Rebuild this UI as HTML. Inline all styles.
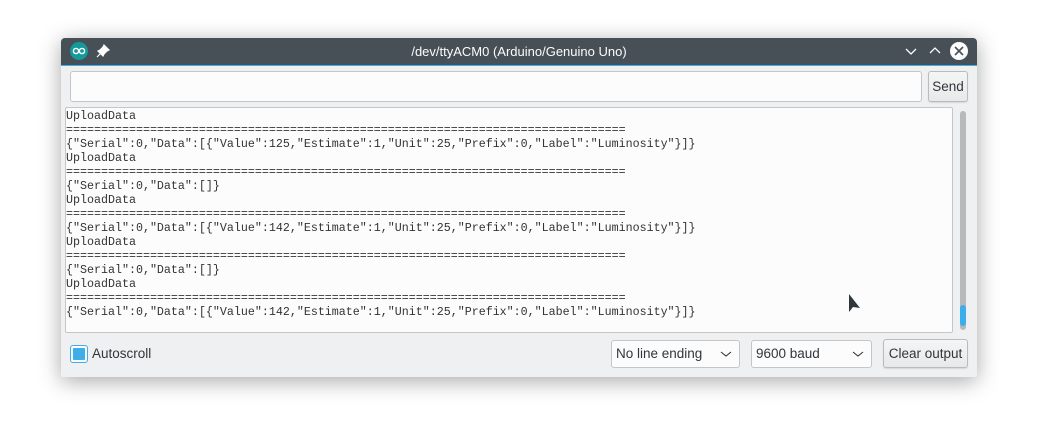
<!DOCTYPE html>
<html><head><meta charset="utf-8"><style>
*{margin:0;padding:0;box-sizing:border-box}
body{width:1038px;height:439px;background:#fff;position:relative;overflow:hidden;font-family:"Liberation Sans",sans-serif}
.win{position:absolute;left:61px;top:38px;width:916px;height:339px;background:#eff0f1;border-radius:4px 4px 2px 2px;box-shadow:0 4px 22px rgba(0,0,0,.35);overflow:hidden}
.tb{position:absolute;left:0;top:0;width:916px;height:28px;background:#475057;border-bottom:1px solid #3daee9}
.title{position:absolute;left:0;right:0;top:6px;text-align:center;color:#fcfcfc;font-size:13px}
.abs{position:absolute}
.input{position:absolute;left:9px;top:33px;width:852px;height:31px;background:#fcfcfc;border:1px solid #c4c6c8;border-radius:3px}
.btn{position:absolute;background:linear-gradient(#f4f5f5,#e8e9ea);border:1px solid #b9bbbd;border-radius:3px;font-size:13.5px;color:#31363b;text-align:center;box-shadow:0 1px 1px rgba(0,0,0,.1)}
.out{position:absolute;left:4px;top:69px;width:888px;height:226px;background:#fcfcfc;border:1px solid #c4c6c8;border-radius:2px;overflow:hidden}
.out pre{font-family:"Liberation Mono",monospace;font-size:11.66px;line-height:14px;color:#333;margin:0;position:relative;top:1px}
.combo{position:absolute;background:#fcfcfc;border:1px solid #c4c6c8;border-radius:3px;font-size:13.5px;color:#31363b;padding:5px 4px}
</style></head><body>
<div class="win">
 <div class="tb">
  <svg class="abs" style="left:8px;top:3px" width="20" height="20" viewBox="0 0 20 20"><circle cx="10" cy="10" r="9" fill="#16999a"/><circle cx="7" cy="10" r="2.6" fill="none" stroke="#fff" stroke-width="1.4"/><circle cx="13" cy="10" r="2.6" fill="none" stroke="#fff" stroke-width="1.4"/></svg>
  <svg class="abs" style="left:35px;top:6px" width="14" height="14" viewBox="0 0 14 14"><path d="M8 1l5 5-2 1-3 3-1 2-5-5 2-1 3-3z M5 9l-4 4" fill="#fff" stroke="#fff" stroke-width="1.2"/></svg>
  <div class="title">/dev/ttyACM0 (Arduino/Genuino Uno)</div>
  <svg class="abs" style="left:843px;top:8px" width="14" height="12"><path d="M2 3l5 5 5-5" fill="none" stroke="#fcfcfc" stroke-width="1.3"/></svg>
  <svg class="abs" style="left:867px;top:6px" width="14" height="12"><path d="M2 9l5-5 5 5" fill="none" stroke="#fcfcfc" stroke-width="1.3"/></svg>
  <svg class="abs" style="left:888px;top:3px" width="20" height="20"><circle cx="10" cy="10" r="9" fill="#fcfcfc"/><path d="M6 6l8 8M14 6l-8 8" stroke="#475057" stroke-width="1.6"/></svg>
 </div>
 <div class="input"></div>
 <div class="btn" style="left:867px;top:33px;width:40px;height:31px;line-height:29px">Send</div>
 <div class="out"><pre>UploadData
================================================================================
{"Serial":0,"Data":[{"Value":125,"Estimate":1,"Unit":25,"Prefix":0,"Label":"Luminosity"}]}
UploadData
================================================================================
{"Serial":0,"Data":[]}
UploadData
================================================================================
{"Serial":0,"Data":[{"Value":142,"Estimate":1,"Unit":25,"Prefix":0,"Label":"Luminosity"}]}
UploadData
================================================================================
{"Serial":0,"Data":[]}
UploadData
================================================================================
{"Serial":0,"Data":[{"Value":142,"Estimate":1,"Unit":25,"Prefix":0,"Label":"Luminosity"}]}</pre>
  <svg class="abs" style="left:782px;top:185px" width="16" height="24"><path d="M1 1v18l4-5 7 1z" fill="#31363b"/></svg>
 </div>
 <div class="abs" style="left:899px;top:73px;width:6px;height:219px;background:#b8b9ba;border-radius:3px"></div>
 <div class="abs" style="left:899px;top:267px;width:6px;height:21px;background:#3daee9;border-radius:3px"></div>
 <div class="abs" style="left:9px;top:307px;width:18px;height:18px;border:1px solid #3daee9;border-radius:3px;background:#fcfcfc"></div>
 <div class="abs" style="left:12px;top:310px;width:12px;height:12px;background:#3daee9;border-radius:1px"></div>
 <div class="abs" style="left:31px;top:308px;font-size:13.5px;color:#31363b">Autoscroll</div>
 <div class="combo" style="left:550px;top:302px;width:129px;height:28px">No line ending</div>
 <svg class="abs" style="left:659px;top:311px" width="12" height="10"><path d="M1 3l5 4 5-4" fill="none" stroke="#31363b" stroke-width="1.1"/></svg>
 <div class="combo" style="left:690px;top:302px;width:121px;height:28px">9600 baud</div>
 <svg class="abs" style="left:791px;top:311px" width="12" height="10"><path d="M1 3l5 4 5-4" fill="none" stroke="#31363b" stroke-width="1.1"/></svg>
 <div class="btn" style="left:822px;top:301px;width:85px;height:29px;line-height:27px">Clear output</div>
</div>
</body></html>
